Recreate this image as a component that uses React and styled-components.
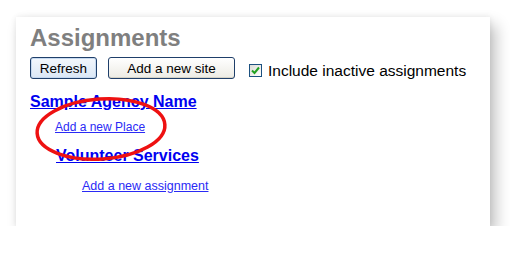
import React from "react";
import styled, { createGlobalStyle } from "styled-components";

const GlobalStyle = createGlobalStyle`
  body {
    margin: 0;
    background: #ffffff;
    font-family: "Liberation Sans", Arial, sans-serif;
  }
`;

const Page = styled.div`
  padding: 17px 0 0 16px;
`;

const Panel = styled.div`
  position: relative;
  width: 474px;
  height: 209px;
  box-sizing: border-box;
  padding: 7px 14px;
  background: #ffffff;
  box-shadow: 0 0 6px rgba(0, 0, 0, 0.08), 6px 8px 14px rgba(0, 0, 0, 0.24);
`;

const Title = styled.h1`
  margin: 0;
  font-size: 24px;
  line-height: 28px;
  font-weight: bold;
  color: #7f7f7f;
`;

const Toolbar = styled.div`
  display: flex;
  align-items: flex-start;
  margin-top: 5px;
  height: 22px;
`;

const Button = styled.button`
  width: ${(p) => p.$width}px;
  height: 22px;
  margin-right: ${(p) => p.$gap}px;
  padding: 0;
  font-family: "Liberation Sans", Arial, sans-serif;
  font-size: 13.5px;
  color: #000000;
  border: 1px solid #1f3f6a;
  border-radius: 3px;
  background: ${(p) =>
    p.$primary
      ? "linear-gradient(#f3f7fc, #dbe7f5)"
      : "linear-gradient(#ffffff, #ecebe4)"};
  box-shadow: ${(p) =>
    p.$primary ? "inset 0 0 0 1px #c6d9f0" : "inset 0 -1px 0 #d6d3c6"};
`;

const CheckLabel = styled.label`
  display: flex;
  align-items: flex-start;
  font-size: 15.5px;
  line-height: 18px;
  color: #000000;
`;

const CheckBox = styled.span`
  display: flex;
  align-items: center;
  justify-content: center;
  width: 13px;
  height: 13px;
  box-sizing: border-box;
  margin: 7px 6px 0 0;
  border: 1px solid #1c5180;
  background: linear-gradient(135deg, #dcdcd6, #ffffff);
`;

const CheckText = styled.span`
  margin-top: 4.5px;
`;

const Group = styled.div`
  margin-top: ${(p) => p.$top}px;
  padding-left: ${(p) => p.$indent}px;
`;

const HeadLink = styled.a`
  display: inline-block;
  font-size: 16px;
  line-height: 18px;
  font-weight: bold;
  color: #0000f0;
  text-decoration: underline;
`;

const SmallLink = styled.a`
  display: inline-block;
  font-size: ${(p) => p.$size || 12}px;
  line-height: 14px;
  color: #2a2af5;
  text-decoration: underline;
`;

const Marker = styled.svg`
  position: absolute;
  left: 17px;
  top: 77px;
  width: 136px;
  height: 72px;
  overflow: visible;
  pointer-events: none;
`;

const App = () => (
  <Page>
    <GlobalStyle />
    <Panel>
      <Title>Assignments</Title>
      <Toolbar>
        <Button $primary $width={67} $gap={11}>Refresh</Button>
        <Button $width={127} $gap={14}>Add a new site</Button>
        <CheckLabel>
          <CheckBox>
            <svg width="9" height="9" viewBox="0 0 9 9">
              <path d="M1 4.5 L3.5 7 L8 1.5" fill="none" stroke="#21a121" strokeWidth="2" />
            </svg>
          </CheckBox>
          <CheckText>Include inactive assignments</CheckText>
        </CheckLabel>
      </Toolbar>
      <Group $top={13.5} $indent={0}>
        <HeadLink href="#">Sample Agency Name</HeadLink>
      </Group>
      <Group $top={6.5} $indent={25}>
        <SmallLink href="#">Add a new Place</SmallLink>
      </Group>
      <Group $top={11.5} $indent={26}>
        <HeadLink href="#">Volunteer Services</HeadLink>
      </Group>
      <Group $top={11} $indent={52}>
        <SmallLink href="#" $size={12.5}>Add a new assignment</SmallLink>
      </Group>
      <Marker viewBox="0 0 136 72">
        <ellipse
          cx="68"
          cy="35"
          rx="64"
          ry="30"
          transform="rotate(-4 68 35)"
          fill="none"
          stroke="#ee1111"
          strokeWidth="3.5"
        />
      </Marker>
    </Panel>
  </Page>
);

export default App;
